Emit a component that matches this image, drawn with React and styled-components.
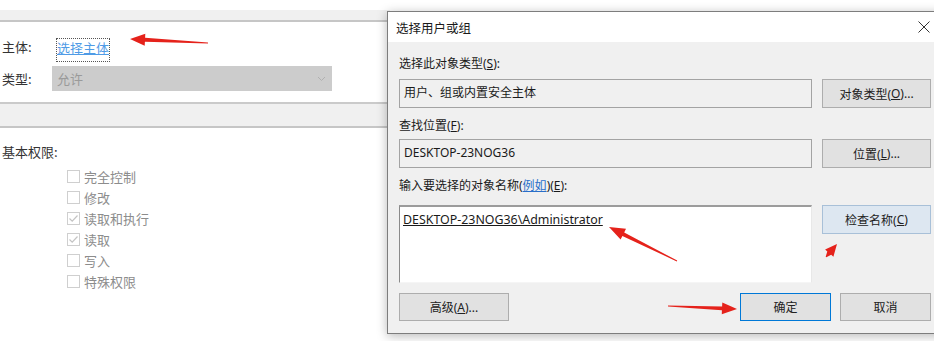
import React from 'react'
import styled, { createGlobalStyle } from 'styled-components'

const GlobalStyle = createGlobalStyle`
  html, body {
    margin: 0;
    padding: 0;
    background: #ffffff;
    overflow: hidden;
  }
  body {
    font-family: "Noto Sans", "Noto Sans CJK SC", sans-serif;
  }
`

const Page = styled.div`
  position: relative;
  display: flex;
  width: 934px;
  height: 341px;
  overflow: hidden;
  background: #ffffff;
`

/* ---------- left permission panel ---------- */

const LeftPanel = styled.div`
  width: 380px;
  flex-shrink: 0;
  display: flex;
  flex-direction: column;
  font-family: "Noto Sans CJK SC", sans-serif;
  font-size: 13px;
  color: #333;
`

const Band = styled.div`
  height: ${({ h }) => h}px;
  margin-top: ${({ top }) => top}px;
  background: #f0f0f0;
  border-top: ${({ lineTop }) => (lineTop ? '2px solid #cacaca' : 'none')};
  border-bottom: 2px solid #c6c6c6;
  margin-right: -10px;
`

const FieldRow = styled.div`
  display: flex;
  align-items: ${({ align }) => align || 'center'};
  margin-top: ${({ top }) => top}px;
  padding-left: 2px;
`

const FieldLabel = styled.span`
  width: 50px;
  line-height: 18px;
  flex-shrink: 0;
`

const PrincipalLink = styled.span`
  margin-left: 4px;
  height: 22px;
  border: 1px dotted #555;
  color: #4f9be6;
  text-decoration: underline;
  line-height: 18px;
`

const Dropdown = styled.div`
  width: 280px;
  height: 25px;
  box-sizing: border-box;
  background: #cccccc;
  color: #9a9a9a;
  display: flex;
  align-items: center;
  justify-content: space-between;
  padding: 0 6px 0 5px;
`

const SectionTitle = styled.div`
  margin-top: ${({ top }) => top}px;
  padding-left: 2px;
  line-height: 18px;
`

const CheckList = styled.div`
  margin-top: 5px;
  padding-left: 67px;
  display: flex;
  flex-direction: column;
`

const CheckRow = styled.div`
  height: 21px;
  display: flex;
  align-items: center;
  gap: 4px;
  color: #8c8c8c;
`

const CheckBox = styled.span`
  width: 13px;
  height: 13px;
  box-sizing: border-box;
  border: 1px solid #cfcfcf;
  background: #fff;
  display: flex;
  align-items: center;
  justify-content: center;
`

/* ---------- dialog ---------- */

const Dialog = styled.div`
  margin-left: 7px;
  margin-top: 11px;
  width: 580px;
  height: 323px;
  flex-shrink: 0;
  box-sizing: border-box;
  border: 1px solid #7d7d7d;
  background: #f0f0f0;
  box-shadow: 0 2px 10px rgba(0, 0, 0, 0.28);
  display: flex;
  flex-direction: column;
  font-family: "Noto Sans", "Noto Sans CJK SC", sans-serif;
  font-size: 12px;
  color: #1a1a1a;
`

const TitleBar = styled.div`
  height: 30px;
  background: #ffffff;
  display: flex;
  align-items: center;
  justify-content: space-between;
  padding: 0 0 0 8px;
  font-size: 12.5px;
`

const CloseBox = styled.div`
  width: 48px;
  display: flex;
  justify-content: flex-start;
  padding-left: 4px;
`

const Body = styled.div`
  padding: 0 11px;
  display: flex;
  flex-direction: column;
`

const Label = styled.div`
  margin-top: ${({ top }) => top}px;
  line-height: 18px;
`

const Row = styled.div`
  margin-top: ${({ top }) => top}px;
  display: grid;
  grid-template-columns: 413px 109px;
  column-gap: 10px;
  align-items: start;
`

const ReadBox = styled.div`
  height: 29px;
  box-sizing: border-box;
  border: 1px solid #a3a3a3;
  background: #f0f0f0;
  padding: 0 0 3px 4px;
  display: flex;
  align-items: center;
`

const NameBox = styled.div`
  height: 78px;
  box-sizing: border-box;
  border-top: 2px solid #9c9c9c;
  border-left: 1px solid #8a8a8a;
  border-right: 1px solid #e8e8e8;
  border-bottom: 1px solid #f5f5f5;
  background: #ffffff;
  padding: 4px 3px;
  line-height: 18px;
  font-size: 12.4px;
  text-decoration: underline;
`

const Button = styled.div`
  height: ${({ h }) => h || 29}px;
  width: ${({ w }) => (w ? `${w}px` : 'auto')};
  box-sizing: border-box;
  border: 1px solid ${({ variant }) =>
    variant === 'default' ? '#0078d7' : variant === 'hover' ? '#a8c0d8' : '#adadad'};
  background: ${({ variant }) => (variant === 'hover' ? '#dde7f1' : '#e1e1e1')};
  display: flex;
  align-items: center;
  justify-content: center;
  color: #222;
`

const Link = styled.span`
  color: #2a6fc9;
  text-decoration: underline;
`

const Key = styled.span`
  text-decoration: underline;
`

const ButtonBar = styled.div`
  margin-top: 10px;
  display: flex;
  justify-content: space-between;
  width: 532px;
`

const ButtonGroup = styled.div`
  display: flex;
  gap: 9px;
`

const Annotations = styled.svg`
  position: absolute;
  left: 0;
  top: 0;
  pointer-events: none;
`

const arrowPoints = (x1, y1, x2, y2, head = 15, headW = 6, shaftW = 2) => {
  const dx = x2 - x1
  const dy = y2 - y1
  const len = Math.hypot(dx, dy)
  const ux = dx / len
  const uy = dy / len
  const nx = -uy
  const ny = ux
  const bx = x2 - ux * head
  const by = y2 - uy * head
  const pts = [
    [x1 + nx * 0.4, y1 + ny * 0.4],
    [bx + nx * shaftW, by + ny * shaftW],
    [bx + nx * headW, by + ny * headW],
    [x2, y2],
    [bx - nx * headW, by - ny * headW],
    [bx - nx * shaftW, by - ny * shaftW],
    [x1 - nx * 0.4, y1 - ny * 0.4],
  ]
  return pts.map((p) => p.map((v) => v.toFixed(1)).join(',')).join(' ')
}

const arrows = [
  [208, 43, 130, 39, 15, 6, 2],
  [677, 261, 609, 227, 16, 6, 2],
  [826, 257, 837, 244, 12, 5.5, 2.5],
  [668, 306, 737, 309, 15, 6, 2],
]

const permissions = [
  { label: '完全控制', checked: false },
  { label: '修改', checked: false },
  { label: '读取和执行', checked: true },
  { label: '读取', checked: true },
  { label: '写入', checked: false },
  { label: '特殊权限', checked: false },
]

const Check = () => (
  <svg width="11" height="11" viewBox="0 0 11 11">
    <path d="M1.5 5.5 L4.2 8.2 L9.5 2.5" fill="none" stroke="#c4c4c4" strokeWidth="1.2" />
  </svg>
)

const App = () => {
  return (
    <Page>
      <GlobalStyle />
      <LeftPanel>
        <Band top={10} h={10} />
        <FieldRow top={16} align="flex-start">
          <FieldLabel>主体:</FieldLabel>
          <PrincipalLink>选择主体</PrincipalLink>
        </FieldRow>
        <FieldRow top={4}>
          <FieldLabel>类型:</FieldLabel>
          <Dropdown>
            <span>允许</span>
            <svg width="9" height="6" viewBox="0 0 9 6">
              <path d="M1 1 L4.5 4.5 L8 1" fill="none" stroke="#b0b0b0" strokeWidth="1" />
            </svg>
          </Dropdown>
        </FieldRow>
        <Band top={11} h={22} lineTop />
        <SectionTitle top={15}>基本权限:</SectionTitle>
        <CheckList>
          {permissions.map((p) => (
            <CheckRow key={p.label}>
              <CheckBox>{p.checked && <Check />}</CheckBox>
              <span>{p.label}</span>
            </CheckRow>
          ))}
        </CheckList>
      </LeftPanel>

      <Dialog>
        <TitleBar>
          <span>选择用户或组</span>
          <CloseBox>
            <svg width="12" height="12" viewBox="0 0 12 12">
              <path d="M0.5 0.5 L11.5 11.5 M11.5 0.5 L0.5 11.5" stroke="#333" strokeWidth="1" />
            </svg>
          </CloseBox>
        </TitleBar>
        <Body>
          <Label top={13}>
            选择此对象类型(<Key>S</Key>):
          </Label>
          <Row top={6}>
            <ReadBox>用户、组或内置安全主体</ReadBox>
            <Button>
              对象类型(<Key>O</Key>)...
            </Button>
          </Row>
          <Label top={9}>
            查找位置(<Key>F</Key>):
          </Label>
          <Row top={4}>
            <ReadBox>DESKTOP-23NOG36</ReadBox>
            <Button>
              位置(<Key>L</Key>)...
            </Button>
          </Row>
          <Label top={9}>
            输入要选择的对象名称(<Link>例如</Link>)(<Key>E</Key>):
          </Label>
          <Row top={10}>
            <NameBox>DESKTOP-23NOG36\Administrator</NameBox>
            <Button variant="hover">
              检查名称(<Key>C</Key>)
            </Button>
          </Row>
          <ButtonBar>
            <Button w={110} h={28}>
              高级(<Key>A</Key>)...
            </Button>
            <ButtonGroup>
              <Button w={91} h={28} variant="default">
                确定
              </Button>
              <Button w={91} h={28}>
                取消
              </Button>
            </ButtonGroup>
          </ButtonBar>
        </Body>
      </Dialog>

      <Annotations width="934" height="341" viewBox="0 0 934 341">
        {arrows.map((a, i) => (
          <polygon key={i} points={arrowPoints(...a)} fill="#e5221b" />
        ))}
      </Annotations>
    </Page>
  )
}

export default App
